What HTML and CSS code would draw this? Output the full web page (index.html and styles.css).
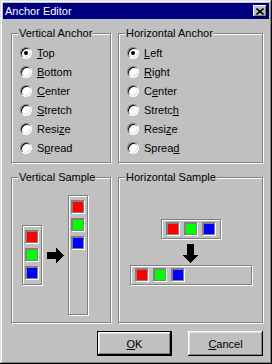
FILE: index.html
```html
<!DOCTYPE html>
<html lang="en">
<head>
    <meta charset="UTF-8">
    <meta name="viewport" content="width=device-width, initial-scale=1.0">
    <title>Anchor Editor</title>
    <link rel="stylesheet" href="styles.css">
</head>
<body>
    <div class="window">
        <div class="titlebar">
            <span class="title">Anchor Editor</span>
            <span class="close-btn">
                <svg width="8" height="7" viewBox="0 0 8 7">
                    <path d="M0.5 0.5 L7.5 6.5 M7.5 0.5 L0.5 6.5" stroke="#000" stroke-width="1.6" fill="none"/>
                </svg>
            </span>
        </div>
        <div class="content">
            <div class="groups">
                <div class="group">
                    <span class="group-title">Vertical Anchor</span>
                    <div class="radio-list">
                        <div class="radio checked"><span class="radio-dot"></span><span><u>T</u>op</span></div>
                        <div class="radio"><span class="radio-dot"></span><span><u>B</u>ottom</span></div>
                        <div class="radio"><span class="radio-dot"></span><span><u>C</u>enter</span></div>
                        <div class="radio"><span class="radio-dot"></span><span><u>S</u>tretch</span></div>
                        <div class="radio"><span class="radio-dot"></span><span>Resi<u>z</u>e</span></div>
                        <div class="radio"><span class="radio-dot"></span><span>S<u>p</u>read</span></div>
                    </div>
                </div>
                <div class="group">
                    <span class="group-title">Horizontal Anchor</span>
                    <div class="radio-list">
                        <div class="radio checked"><span class="radio-dot"></span><span><u>L</u>eft</span></div>
                        <div class="radio"><span class="radio-dot"></span><span><u>R</u>ight</span></div>
                        <div class="radio"><span class="radio-dot"></span><span>C<u>e</u>nter</span></div>
                        <div class="radio"><span class="radio-dot"></span><span>Stretc<u>h</u></span></div>
                        <div class="radio"><span class="radio-dot"></span><span>Resi<u>z</u>e</span></div>
                        <div class="radio"><span class="radio-dot"></span><span>Sprea<u>d</u></span></div>
                    </div>
                </div>
                <div class="group vsample">
                    <span class="group-title">Vertical Sample</span>
                    <div class="tray tray-col">
                        <span class="swatch red"></span>
                        <span class="swatch green"></span>
                        <span class="swatch blue"></span>
                    </div>
                    <svg class="arrow-right" width="17" height="15" viewBox="0 0 17 15" shape-rendering="crispEdges">
                        <polygon points="0,4 9,4 9,0 17,7.5 9,15 9,11 0,11" fill="#000"/>
                    </svg>
                    <div class="tray tray-col tray-tall">
                        <span class="swatch red"></span>
                        <span class="swatch green"></span>
                        <span class="swatch blue"></span>
                    </div>
                </div>
                <div class="group hsample">
                    <span class="group-title">Horizontal Sample</span>
                    <div class="tray tray-row">
                        <span class="swatch red"></span>
                        <span class="swatch green"></span>
                        <span class="swatch blue"></span>
                    </div>
                    <svg class="arrow-down" width="15" height="19" viewBox="0 0 15 19" shape-rendering="crispEdges">
                        <polygon points="4,0 11,0 11,11 15,11 7.5,19 0,11 4,11" fill="#000"/>
                    </svg>
                    <div class="tray tray-row tray-wide">
                        <span class="swatch red"></span>
                        <span class="swatch green"></span>
                        <span class="swatch blue"></span>
                    </div>
                </div>
            </div>
            <div class="buttons">
                <button type="button" class="btn btn-default"><u>O</u>K</button>
                <button type="button" class="btn"><u>C</u>ancel</button>
            </div>
        </div>
    </div>
</body>
</html>
```

FILE: styles.css
```css
* {
    box-sizing: border-box;
}
body {
    margin: 0;
    font-family: "Liberation Sans", Arial, sans-serif;
    font-size: 11px;
    color: #000;
    background-color: #c0c0c0;
}
.window {
    width: 272px;
    height: 364px;
    padding: 3px;
    background-color: #c0c0c0;
    box-shadow: inset -1px -1px 0 #000, inset 1px 1px 0 #dfdfdf, inset -2px -2px 0 #808080, inset 2px 2px 0 #fff;
}
.titlebar {
    height: 16px;
    background-color: #000080;
    display: flex;
    align-items: center;
    justify-content: space-between;
    padding: 0 2px 0 2px;
}
.title {
    color: #fff;
    line-height: 16px;
}
.close-btn {
    width: 14px;
    height: 12px;
    background-color: #c0c0c0;
    display: flex;
    align-items: center;
    justify-content: center;
    box-shadow: inset -1px -1px 0 #000, inset 1px 1px 0 #fff, inset -2px -2px 0 #808080;
}
.close-btn svg {
    display: block;
}
.content {
    padding: 14px 6px 0 8px;
}
.groups {
    display: grid;
    grid-template-columns: 100px 145px;
    grid-template-rows: 130px 146px;
    column-gap: 7px;
    row-gap: 14px;
}
.group {
    position: relative;
    border: 1px solid #808080;
    box-shadow: inset 1px 1px 0 #fff, 1px 1px 0 #fff;
}
.group-title {
    position: absolute;
    top: -7px;
    left: 6px;
    padding: 0 1px;
    line-height: 13px;
    background-color: #c0c0c0;
    white-space: nowrap;
}
.radio-list {
    padding: 9px 0 0 8px;
}
.radio {
    height: 19px;
    display: flex;
    align-items: center;
    gap: 5px;
}
.radio-dot {
    position: relative;
    width: 12px;
    height: 12px;
    border-radius: 50%;
    background-color: #fff;
    border: 1px solid;
    border-color: #808080 #fff #fff #808080;
    box-shadow: inset 1px 1px 0 #000, inset -1px -1px 0 #dfdfdf;
}
.radio.checked .radio-dot::after {
    content: "";
    position: absolute;
    left: 3px;
    top: 3px;
    width: 4px;
    height: 4px;
    border-radius: 50%;
    background-color: #000;
}
.vsample {
    display: flex;
    align-items: center;
    padding: 10px 0 0 10px;
}
.hsample {
    display: flex;
    flex-direction: column;
    align-items: center;
    justify-content: center;
    padding-top: 3px;
}
.tray {
    display: flex;
    gap: 4px;
    border: 1px solid #808080;
    box-shadow: inset 1px 1px 0 #fff, 1px 1px 0 #fff;
}
.tray-col {
    flex-direction: column;
    width: 20px;
    height: 60px;
    padding: 4px 2px;
}
.tray-tall {
    height: 120px;
}
.tray-row {
    flex-direction: row;
    width: 60px;
    height: 20px;
    padding: 2px 4px;
}
.tray-wide {
    width: 122px;
}
.swatch {
    display: block;
    width: 14px;
    height: 14px;
    flex: none;
    border: 1px solid;
    border-color: #808080 #fff #fff #808080;
    box-shadow: inset 0 0 0 1px #808080;
}
.red {
    background-color: #ff0000;
}
.green {
    background-color: #00ff00;
}
.blue {
    background-color: #0000ff;
}
.arrow-right {
    display: block;
    margin: 0 4px 0 5px;
}
.arrow-down {
    display: block;
    margin: 5px 0 2px 0;
}
.buttons {
    display: flex;
    justify-content: flex-end;
    gap: 16px;
    margin-top: 8px;
}
.btn {
    width: 75px;
    height: 25px;
    padding: 0;
    border: none;
    background-color: #c0c0c0;
    font-family: "Liberation Sans", Arial, sans-serif;
    font-size: 11px;
    color: #000;
    box-shadow: inset -1px -1px 0 #000, inset 1px 1px 0 #fff, inset -2px -2px 0 #808080, inset 2px 2px 0 #dfdfdf;
}
.btn-default {
    border: 1px solid #000;
}
```
